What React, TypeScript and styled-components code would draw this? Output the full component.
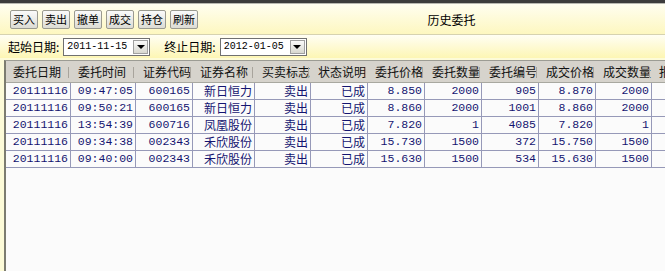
import styled, { createGlobalStyle } from 'styled-components';

const GlobalStyle = createGlobalStyle`
  html, body {
    margin: 0;
    padding: 0;
    background: #fbfbfb;
    overflow: hidden;
  }
  body {
    font-family: "Noto Sans CJK SC", "Liberation Sans", sans-serif;
    font-size: 12px;
  }
`;

const Page = styled.div`
  width: 665px;
  height: 271px;
  display: flex;
  flex-direction: column;
  background: #fdfbd8;
  overflow: hidden;
`;

const TopStrip = styled.div`
  height: 3px;
  background: #3c3c3c;
  border-bottom: 1px solid #b8b8b0;
  flex-shrink: 0;
`;

const Toolbar = styled.div`
  height: 30px;
  display: flex;
  align-items: center;
  padding-left: 10px;
  background: linear-gradient(#fffef0, #fdf7c0);
  border-bottom: 1px solid #d6d2b0;
  flex-shrink: 0;
`;

const Buttons = styled.div`
  display: flex;
  gap: 4px;
`;

const ToolButton = styled.button`
  width: 28px;
  height: 19px;
  padding: 0;
  border: 1px solid #9a9a90;
  border-radius: 2px;
  background: linear-gradient(#fafafa, #dcdcd4);
  font-family: "Noto Sans CJK SC", sans-serif;
  font-size: 11px;
  line-height: 17px;
  color: #000;
`;

const Title = styled.div`
  flex: 1;
  text-align: center;
  padding-left: 40px;
  font-size: 12px;
  color: #000;
`;

const FilterRow = styled.div`
  height: 23px;
  display: flex;
  align-items: center;
  padding-left: 8px;
  background: linear-gradient(#fffef4, #fdf6b4);
  flex-shrink: 0;
`;

const Label = styled.span<{ $gap?: number }>`
  font-size: 12px;
  margin-left: ${(p) => p.$gap ?? 0}px;
  margin-right: 4px;
  color: #000;
`;

const DateBox = styled.div`
  width: 82px;
  height: 16px;
  display: flex;
  align-items: center;
  justify-content: space-between;
  background: #fff;
  border: 1px solid #707070;
  padding-left: 3px;
  font-family: "Liberation Mono", monospace;
  font-size: 10px;
`;

const DropButton = styled.span`
  width: 15px;
  height: 14px;
  margin-right: 1px;
  display: flex;
  align-items: center;
  justify-content: center;
  background: linear-gradient(#fafafa, #d8d8d0);
  border: 1px solid #a0a0a0;
  box-sizing: border-box;

  &::before {
    content: '';
    border-left: 4px solid transparent;
    border-right: 4px solid transparent;
    border-top: 4px solid #000;
  }
`;

const TableFrame = styled.div`
  flex: 1;
  margin: 2px 0 0 4px;
  border-left: 2px solid #7c7c70;
  border-top: 1px solid #9c9c94;
  background: #fbfbfb;
`;

const Table = styled.div`
  display: grid;
  grid-template-columns: 65px 65px 57px 62px 56px 57px 57px 57px 57px 57px 56px 60px;
`;

const HeadCell = styled.div`
  position: relative;
  height: 21px;
  line-height: 21px;
  padding-left: 7px;
  background: #d6d3cc;
  border-bottom: 1px solid #a8a8a0;
  white-space: nowrap;
  overflow: hidden;
  color: #111;

  &::after {
    content: '';
    position: absolute;
    right: 2px;
    top: 6px;
    height: 11px;
    width: 1px;
    background: #a8a49c;
  }
`;

const Cell = styled.div<{ $cjk?: boolean }>`
  height: 16px;
  line-height: 16px;
  padding-right: 2px;
  text-align: right;
  border-right: 1px solid #9699b8;
  border-bottom: 1px solid #9699b8;
  color: #141470;
  white-space: nowrap;
  overflow: hidden;
  font-family: ${(p) =>
    p.$cjk ? '"Noto Sans CJK SC", sans-serif' : '"Liberation Mono", monospace'};
  font-size: ${(p) => (p.$cjk ? 12 : 11.5)}px;
`;

const headers = [
  '委托日期', '委托时间', '证券代码', '证券名称', '买卖标志', '状态说明',
  '委托价格', '委托数量', '委托编号', '成交价格', '成交数量', '报价方式',
];

const rows = [
  ['20111116', '09:47:05', '600165', '新日恒力', '卖出', '已成', '8.850', '2000', '905', '8.870', '2000', ''],
  ['20111116', '09:50:21', '600165', '新日恒力', '卖出', '已成', '8.860', '2000', '1001', '8.860', '2000', ''],
  ['20111116', '13:54:39', '600716', '凤凰股份', '卖出', '已成', '7.820', '1', '4085', '7.820', '1', ''],
  ['20111116', '09:34:38', '002343', '禾欣股份', '卖出', '已成', '15.730', '1500', '372', '15.750', '1500', ''],
  ['20111116', '09:40:00', '002343', '禾欣股份', '卖出', '已成', '15.630', '1500', '534', '15.630', '1500', ''],
];

const cjkCols = [3, 4, 5];

export default function App() {
  return (
    <Page>
      <GlobalStyle />
      <TopStrip />
      <Toolbar>
        <Buttons>
          {['买入', '卖出', '撤单', '成交', '持仓', '刷新'].map((b) => (
            <ToolButton key={b}>{b}</ToolButton>
          ))}
        </Buttons>
        <Title>历史委托</Title>
      </Toolbar>
      <FilterRow>
        <Label>起始日期:</Label>
        <DateBox>
          2011-11-15
          <DropButton />
        </DateBox>
        <Label $gap={14}>终止日期:</Label>
        <DateBox>
          2012-01-05
          <DropButton />
        </DateBox>
      </FilterRow>
      <TableFrame>
        <Table>
          {headers.map((h) => (
            <HeadCell key={h}>{h}</HeadCell>
          ))}
          {rows.map((r, i) =>
            r.map((v, j) => (
              <Cell key={`${i}-${j}`} $cjk={cjkCols.includes(j)}>
                {v}
              </Cell>
            ))
          )}
        </Table>
      </TableFrame>
    </Page>
  );
}
